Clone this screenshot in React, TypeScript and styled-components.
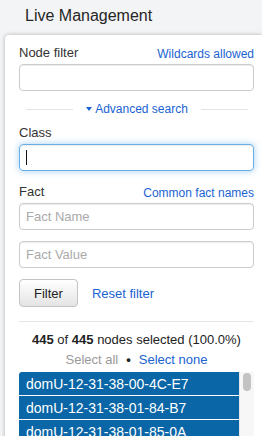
import React from 'react'
import styled, { createGlobalStyle } from 'styled-components'

const GlobalStyle = createGlobalStyle`
    html, body {
        margin: 0;
        padding: 0;
        overflow: hidden;
        background: #f3f4f5;
    }
    body {
        font-family: "Liberation Sans", Arial, sans-serif;
        color: #333;
    }
`

const LINK = '#1a63d2'

const Header = styled.div`
    height: 29px;
    padding: 6px 0 0 25px;
    font-size: 16px;
    line-height: 20px;
    color: #262626;
`

const Panel = styled.div`
    margin-left: 5px;
    min-height: 420px;
    padding: 10px 8px 0 14px;
    background: #fff;
    border-radius: 4px 0 0 0;
    box-shadow: 0 0 4px rgba(0, 0, 0, 0.28);
`

const Field = styled.div<{ $top?: number }>`
    margin-top: ${(p) => p.$top ?? 0}px;
`

const FieldHead = styled.div`
    display: flex;
    justify-content: space-between;
    align-items: flex-end;
    margin-bottom: 2px;
`

const Label = styled.label`
    font-size: 13px;
    line-height: 15px;
    padding-bottom: 2px;
    color: #333;
`

const HintLink = styled.a`
    font-size: 12px;
    line-height: 15px;
    color: ${LINK};
    text-decoration: none;
`

const TextInput = styled.input`
    display: block;
    width: 100%;
    height: 27px;
    box-sizing: border-box;
    padding: 0 6px;
    border: 1px solid #ccc;
    border-radius: 4px;
    font-family: inherit;
    font-size: 13px;
    color: #333;
    outline: none;
    box-shadow: inset 0 1px 1px rgba(0, 0, 0, 0.075);
    &::placeholder {
        color: #aaa;
    }
`

const FocusedInput = styled.div`
    display: flex;
    align-items: center;
    height: 27px;
    box-sizing: border-box;
    padding: 0 6px;
    border: 1px solid #66afe9;
    border-radius: 4px;
    box-shadow: inset 0 1px 1px rgba(0, 0, 0, 0.075),
        0 0 7px rgba(102, 175, 233, 0.6);
`

const Caret = styled.span`
    width: 1px;
    height: 15px;
    background: #111;
`

const Divider = styled.div`
    display: flex;
    align-items: center;
    gap: 13px;
    margin-top: 11px;
    padding: 0 6px 0 7px;
`

const DividerLine = styled.div`
    flex: 1;
    height: 1px;
    background: #e4e4e4;
`

const Toggle = styled.a`
    display: flex;
    align-items: center;
    gap: 3px;
    font-size: 12px;
    line-height: 14px;
    color: ${LINK};
    text-decoration: none;
`

const Triangle = styled.span`
    width: 0;
    height: 0;
    border-left: 3.5px solid transparent;
    border-right: 3.5px solid transparent;
    border-top: 4px solid ${LINK};
`

const Actions = styled.div`
    display: flex;
    align-items: center;
    gap: 14px;
    margin-top: 11px;
`

const Button = styled.button`
    height: 28px;
    padding: 0 14px;
    border: 1px solid #c4c4c4;
    border-radius: 4px;
    background: linear-gradient(#ffffff, #e4e4e4);
    font-family: inherit;
    font-size: 13px;
    color: #222;
`

const TextLink = styled.a<{ $muted?: boolean }>`
    font-size: 13px;
    color: ${(p) => (p.$muted ? '#9a9a9a' : LINK)};
    text-decoration: none;
`

const Rule = styled.div`
    height: 1px;
    margin-top: 14px;
    background: #e6e6e6;
`

const Summary = styled.div`
    margin-top: 8px;
    text-align: center;
    font-size: 13px;
    line-height: 20px;
    color: #222;
`

const SelectRow = styled.div`
    display: flex;
    justify-content: center;
    gap: 8px;
    font-size: 13px;
    line-height: 20px;
`

const Bullet = styled.span`
    color: #222;
    font-weight: bold;
`

const NodeList = styled.div`
    display: flex;
    margin-top: 2px;
`

const Items = styled.div`
    flex: 1;
    border-radius: 3px 0 0 0;
    overflow: hidden;
`

const Item = styled.div`
    height: 23px;
    padding-left: 7px;
    border-bottom: 1px solid #fff;
    background: #0a66a6;
    color: #fff;
    font-size: 14px;
    line-height: 24px;
`

const Scrollbar = styled.div`
    width: 14px;
    padding-top: 1px;
    background: #f7f7f7;
    border-left: 1px solid #e6e6e6;
`

const Thumb = styled.div`
    width: 8px;
    height: 18px;
    margin-left: 3px;
    border-radius: 4px;
    background: #c3c3c3;
`

const nodes = [
    'domU-12-31-38-00-4C-E7',
    'domU-12-31-38-01-84-B7',
    'domU-12-31-38-01-85-0A',
]

export default function App() {
    return (
        <>
            <GlobalStyle />
            <Header>Live Management</Header>
            <Panel>
                <Field>
                    <FieldHead>
                        <Label>Node filter</Label>
                        <HintLink href="#">Wildcards allowed</HintLink>
                    </FieldHead>
                    <TextInput type="text" />
                </Field>

                <Divider>
                    <DividerLine />
                    <Toggle href="#">
                        <Triangle />
                        Advanced search
                    </Toggle>
                    <DividerLine />
                </Divider>

                <Field $top={9}>
                    <FieldHead>
                        <Label>Class</Label>
                    </FieldHead>
                    <FocusedInput role="textbox">
                        <Caret />
                    </FocusedInput>
                </Field>

                <Field $top={13}>
                    <FieldHead>
                        <Label>Fact</Label>
                        <HintLink href="#">Common fact names</HintLink>
                    </FieldHead>
                    <TextInput type="text" placeholder="Fact Name" />
                </Field>
                <Field $top={11}>
                    <TextInput type="text" placeholder="Fact Value" />
                </Field>

                <Actions>
                    <Button>Filter</Button>
                    <TextLink href="#">Reset filter</TextLink>
                </Actions>

                <Rule />

                <Summary>
                    <b>445</b> of <b>445</b> nodes selected (100.0%)
                </Summary>
                <SelectRow>
                    <TextLink $muted>Select all</TextLink>
                    <Bullet>•</Bullet>
                    <TextLink href="#">Select none</TextLink>
                </SelectRow>

                <NodeList>
                    <Items>
                        {nodes.map((n) => (
                            <Item key={n}>{n}</Item>
                        ))}
                    </Items>
                    <Scrollbar>
                        <Thumb />
                    </Scrollbar>
                </NodeList>
            </Panel>
        </>
    )
}
